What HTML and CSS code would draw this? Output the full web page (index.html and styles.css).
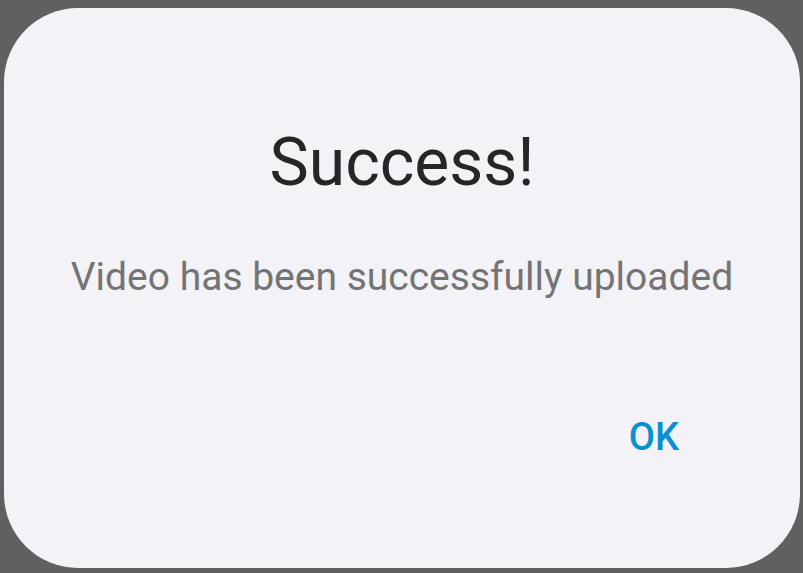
FILE: index.html
```html
<!DOCTYPE html>
<html lang="en">
<head>
<meta charset="utf-8">
<title>Success</title>
<link rel="stylesheet" href="styles.css">
</head>
<body>
<div class="scrim">
  <div class="dialog" role="dialog">
    <h1 class="title">Success!</h1>
    <p class="message">Video has been successfully uploaded</p>
    <div class="actions">
      <button class="ok">OK</button>
    </div>
  </div>
</div>
</body>
</html>
```
FILE: styles.css
```css
html, body {
  margin: 0;
  padding: 0;
  width: 803px;
  height: 573px;
  overflow: hidden;
  background: #606062;
  font-family: Roboto, "Noto Sans", sans-serif;
}
.scrim {
  box-sizing: border-box;
  width: 803px;
  height: 573px;
  padding: 8px 3px 5px 4px;
  display: flex;
}
.dialog {
  box-sizing: border-box;
  flex: 1;
  background: #f2f2f7;
  border-radius: 74px;
  padding-top: 122px;
  display: flex;
  flex-direction: column;
  align-items: center;
}
.title {
  margin: 0;
  font-size: 66px;
  line-height: 1;
  font-weight: 400;
  color: #262626;
}
.message {
  margin: 62px 0 0;
  font-size: 39px;
  line-height: 1;
  color: #747474;
}
.actions {
  align-self: stretch;
  display: flex;
  justify-content: flex-end;
  margin-top: 121px;
  padding-right: 121px;
}
.ok {
  border: 0;
  background: none;
  padding: 0;
  font-family: Roboto, "Noto Sans", sans-serif;
  font-size: 38px;
  line-height: 1;
  font-weight: 500;
  color: #0a8fd3;
}
```
